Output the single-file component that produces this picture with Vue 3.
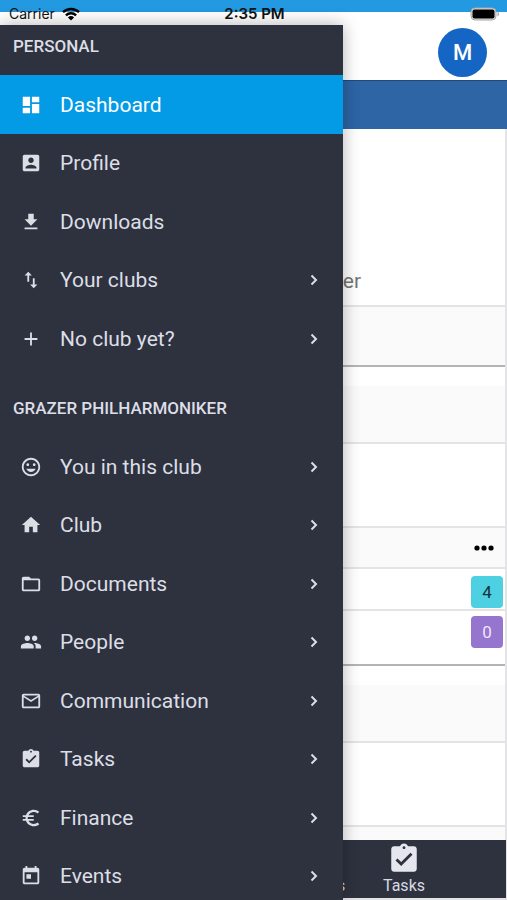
<script setup>
const icons = {
  dashboard: 'M3 13h8V3H3v10zm0 8h8v-6H3v6zm10 0h8V11h-8v10zm0-18v6h8V3h-8z',
  profile: 'M3 5v14c0 1.1.89 2 2 2h14c1.1 0 2-.9 2-2V5c0-1.1-.9-2-2-2H5c-1.11 0-2 .9-2 2zm12 4c0 1.66-1.34 3-3 3s-3-1.34-3-3 1.34-3 3-3 3 1.34 3 3zm-9 8c0-2 4-3.1 6-3.1s6 1.1 6 3.1v1H6v-1z',
  download: 'M19 9h-4V3H9v6H5l7 7 7-7zM5 18v2h14v-2H5z',
  swap: 'M16 17.01V10h-2v7.01h-3L15 21l4-3.99h-3zM9 3L5 6.99h3V14h2V6.99h3L9 3z',
  add: 'M19 13h-6v6h-2v-6H5v-2h6V5h2v6h6v2z',
  face: 'M11.99 2C6.47 2 2 6.48 2 12s4.47 10 9.99 10C17.52 22 22 17.52 22 12S17.52 2 11.99 2zM12 20c-4.42 0-8-3.58-8-8s3.58-8 8-8 8 3.58 8 8-3.58 8-8 8zm3.5-9c.83 0 1.5-.67 1.5-1.5S16.33 8 15.5 8 14 8.67 14 9.5s.67 1.5 1.5 1.5zm-7 0c.83 0 1.5-.67 1.5-1.5S9.33 8 8.5 8 7 8.67 7 9.5 7.67 11 8.5 11zm3.5 6.5c2.33 0 4.31-1.46 5.11-3.5H6.89c.8 2.04 2.78 3.5 5.11 3.5z',
  home: 'M10 20v-6h4v6h5v-8h3L12 3 2 12h3v8z',
  folder: 'M20 6h-8l-2-2H4c-1.1 0-1.99.9-1.99 2L2 18c0 1.1.9 2 2 2h16c1.1 0 2-.9 2-2V8c0-1.1-.9-2-2-2zm0 12H4V8h16v10z',
  people: 'M16 11c1.66 0 2.99-1.34 2.99-3S17.66 5 16 5c-1.66 0-3 1.34-3 3s1.34 3 3 3zm-8 0c1.66 0 2.99-1.34 2.99-3S9.66 5 8 5C6.34 5 5 6.34 5 8s1.34 3 3 3zm0 2c-2.33 0-7 1.17-7 3.5V19h14v-2.5c0-2.33-4.67-3.5-7-3.5zm8 0c-.29 0-.62.02-.97.05 1.16.84 1.97 1.97 1.97 3.45V19h6v-2.5c0-2.33-4.67-3.5-7-3.5z',
  mail: 'M20 4H4c-1.1 0-1.99.9-1.99 2L2 18c0 1.1.9 2 2 2h16c1.1 0 2-.9 2-2V6c0-1.1-.9-2-2-2zm0 14H4V8l8 5 8-5v10zm-8-7L4 6h16l-8 5z',
  tasks: 'M19 3h-4.18C14.4 1.84 13.3 1 12 1c-1.3 0-2.4.84-2.82 2H5c-1.1 0-2 .9-2 2v14c0 1.1.9 2 2 2h14c1.1 0 2-.9 2-2V5c0-1.1-.9-2-2-2zm-7 0c.55 0 1 .45 1 1s-.45 1-1 1-1-.45-1-1 .45-1 1-1zm-2 14l-4-4 1.41-1.41L10 14.17l6.59-6.59L18 9l-8 8z',
  euro: 'M15 18.5c-2.51 0-4.68-1.42-5.76-3.5H15v-2H8.58c-.05-.33-.08-.66-.08-1s.03-.67.08-1H15V9H9.24C10.32 6.92 12.5 5.5 15 5.5c1.61 0 3.09.59 4.23 1.57L21 5.3C19.41 3.87 17.3 3 15 3c-3.92 0-7.24 2.51-8.48 6H3v2h3.06c-.04.33-.06.66-.06 1s.02.67.06 1H3v2h3.52c1.24 3.49 4.56 6 8.48 6 2.31 0 4.41-.87 6-2.3l-1.78-1.77c-1.13.98-2.6 1.57-4.22 1.57z',
  event: 'M19 3h-1V1h-2v2H8V1H6v2H5c-1.11 0-1.99.9-1.99 2L3 19c0 1.1.89 2 2 2h14c1.1 0 2-.9 2-2V5c0-1.1-.9-2-2-2zm0 16H5V8h14v11zM7 10h5v5H7z',
}

const groups = [
  {
    title: 'PERSONAL',
    items: [
      { label: 'Dashboard', icon: 'dashboard', active: true },
      { label: 'Profile', icon: 'profile' },
      { label: 'Downloads', icon: 'download' },
      { label: 'Your clubs', icon: 'swap', more: true },
      { label: 'No club yet?', icon: 'add', more: true },
    ],
  },
  {
    title: 'GRAZER PHILHARMONIKER',
    items: [
      { label: 'You in this club', icon: 'face', more: true },
      { label: 'Club', icon: 'home', more: true },
      { label: 'Documents', icon: 'folder', more: true },
      { label: 'People', icon: 'people', more: true },
      { label: 'Communication', icon: 'mail', more: true },
      { label: 'Tasks', icon: 'tasks', more: true },
      { label: 'Finance', icon: 'euro', more: true },
      { label: 'Events', icon: 'event', more: true },
    ],
  },
]

const tabs = [
  { label: 'Discussions', icon: 'mail' },
  { label: 'Tasks', icon: 'tasks' },
]
</script>

<template>
  <div class="screen">
    <div class="status">
      <div class="carrier">
        <span>Carrier</span>
        <svg class="wifi" viewBox="0 0 18 14" aria-hidden="true">
          <path d="M1 5.2a11.5 11.5 0 0 1 16 0M3.9 8.3a7.3 7.3 0 0 1 10.2 0" fill="none" stroke="#000" stroke-width="2.4" />
          <path d="M9 13.6 5.9 10.4a4.5 4.5 0 0 1 6.2 0z" fill="#000" />
        </svg>
      </div>
      <span class="clock">2:35 PM</span>
      <svg class="battery" viewBox="0 0 30 14" aria-hidden="true">
        <rect x="1" y="1" width="25" height="12" rx="4" fill="#ddd" stroke="#a8a8a8" />
        <path d="M27.5 4.5v5c2-.8 2-4.2 0-5z" fill="#a8a8a8" />
        <rect x="2.5" y="2.5" width="22" height="9" rx="2" fill="#000" />
      </svg>
    </div>

    <div class="body">
      <div class="page">
        <header class="topbar">
          <button class="avatar" type="button" aria-label="Account">M</button>
        </header>
        <div class="band"></div>
        <main class="content">
          <section class="card">
            <div class="hero"><p>Grazer Philharmoniker</p></div>
            <div class="card-foot"></div>
          </section>
          <section class="card">
            <div class="card-head"></div>
            <div class="card-body"></div>
            <div class="toolbar">
              <button class="dots" type="button" aria-label="More options">
                <svg viewBox="0 0 20 6" aria-hidden="true">
                  <circle cx="3" cy="3" r="2.6" /><circle cx="10" cy="3" r="2.6" /><circle cx="17" cy="3" r="2.6" />
                </svg>
              </button>
            </div>
            <div class="count-row"><span class="badge cyan">4</span></div>
            <div class="count-row last"><span class="badge violet">0</span></div>
          </section>
          <section class="card">
            <div class="card-head"></div>
            <div class="card-body"></div>
            <div class="toolbar"></div>
          </section>
        </main>
        <nav class="tabs" aria-label="Tabs">
          <a v-for="tab in tabs" :key="tab.label" class="tab" href="#">
            <svg viewBox="0 0 24 24" aria-hidden="true"><path :d="icons[tab.icon]" /></svg>
            <span>{{ tab.label }}</span>
          </a>
        </nav>
      </div>

      <aside class="drawer">
        <nav v-for="group in groups" :key="group.title" class="group">
          <h2>{{ group.title }}</h2>
          <ul>
            <li v-for="item in group.items" :key="item.label">
              <a href="#" class="item" :class="{ active: item.active }">
                <svg class="icon" viewBox="0 0 24 24" aria-hidden="true"><path :d="icons[item.icon]" /></svg>
                <span class="label">{{ item.label }}</span>
                <svg v-if="item.more" class="chevron" viewBox="0 0 8 12" aria-hidden="true">
                  <path d="M1.5 1.5 6 6l-4.5 4.5" />
                </svg>
              </a>
            </li>
          </ul>
        </nav>
      </aside>
    </div>
  </div>
</template>

<style>
body {
  margin: 0;
  background: #fff;
}
</style>

<style scoped>
* {
  box-sizing: border-box;
}

.screen {
  display: flex;
  flex-direction: column;
  height: 100vh;
  overflow: hidden;
  background: #fff;
  font-family: Roboto, "Liberation Sans", sans-serif;
}

.status {
  display: grid;
  grid-template-columns: 1fr auto 1fr;
  align-items: center;
  flex: none;
  height: 25px;
  padding: 2px 7px 0 9px;
  background: linear-gradient(#2299e0 12px, #fff 12px);
  color: #111;
  font-family: Inter, "Liberation Sans", sans-serif;
  font-size: 14px;
  line-height: 22px;
}

.carrier {
  display: flex;
  align-items: center;
  gap: 7px;
}

.wifi {
  width: 18px;
  height: 14px;
}

.clock {
  font-size: 15px;
  font-weight: 600;
}

.battery {
  justify-self: end;
  width: 30px;
  height: 14px;
}

.body {
  position: relative;
  flex: 1;
  min-height: 0;
}

.page {
  display: flex;
  flex-direction: column;
  height: 100%;
  padding-bottom: 2px;
  background: #e4e4e6;
}

.topbar {
  display: flex;
  align-items: center;
  justify-content: flex-end;
  flex: none;
  height: 55px;
  padding: 0 20px;
  background: #fff;
}

.avatar {
  width: 49px;
  height: 49px;
  padding: 0;
  border: 0;
  border-radius: 50%;
  background: #1565c5;
  color: #fff;
  font: 500 22px/49px Roboto, sans-serif;
}

.band {
  flex: none;
  height: 49px;
  border-top: 1px solid #1f4a80;
  background: #2d65a5;
}

.content {
  display: flex;
  flex-direction: column;
  gap: 19px;
  flex: 1;
  min-height: 0;
  margin-right: 2px;
  overflow: hidden;
  background: #fff;
}

.card {
  flex: none;
  border-bottom: 2px solid #b4b4b4;
}

.hero {
  display: flex;
  align-items: flex-end;
  justify-content: center;
  height: 176px;
  padding: 0 0 12px 10px;
  color: #757575;
  font-size: 21px;
  line-height: 24px;
}

.hero p {
  margin: 0;
}

.card-foot {
  height: 60px;
  border-top: 2px solid #e4e4e4;
  background: #fafafa;
}

.card-head {
  height: 56px;
  background: #fafafa;
}

.card-body {
  height: 84px;
  border-top: 2px solid #e4e4e4;
}

.toolbar {
  display: flex;
  align-items: center;
  justify-content: flex-end;
  height: 41px;
  padding-right: 11px;
  border-top: 2px solid #e4e4e4;
  background: #fafafa;
}

.dots {
  display: flex;
  padding: 0;
  border: 0;
  background: none;
}

.dots svg {
  width: 20px;
  height: 6px;
}

.count-row {
  display: flex;
  align-items: flex-start;
  justify-content: flex-end;
  height: 42px;
  padding: 7px 2px 0 0;
  border-top: 2px solid #e4e4e4;
}

.count-row.last {
  height: 55px;
  padding-top: 5px;
}

.badge {
  width: 32px;
  height: 32px;
  border-radius: 4px;
  font-size: 17px;
  line-height: 32px;
  text-align: center;
}

.cyan {
  background: #4dd0e1;
  color: #12333a;
}

.violet {
  background: #9575cd;
  color: #f0e6ff;
}

.tabs {
  display: flex;
  justify-content: flex-end;
  flex: none;
  height: 58px;
  margin-right: 1px;
  padding-right: 51px;
  background: #2e323f;
}

.tab {
  display: flex;
  flex-direction: column;
  align-items: center;
  flex: 0 1 102px;
  padding-top: 2px;
  color: #d8dae3;
  font-size: 16px;
  line-height: 20px;
  text-decoration: none;
}

.tab svg {
  width: 34px;
  height: 34px;
  fill: #e6e7ee;
}

.drawer {
  position: absolute;
  inset: 0 auto 0 0;
  width: 343px;
  max-width: 85%;
  overflow: hidden;
  background: #2e323f;
  box-shadow: 0 0 16px rgba(0, 0, 0, 0.3);
}

.group {
  margin-bottom: 19px;
}

.group h2 {
  height: 50px;
  margin: 0;
  padding: 10px 13px;
  color: #dcdee6;
  font-size: 17px;
  font-weight: 500;
  line-height: 22px;
}

.group ul {
  margin: 0;
  padding: 0;
  list-style: none;
}

.group li {
  height: 59px;
}

.group li:nth-child(even) {
  height: 58px;
}

.item {
  display: flex;
  align-items: center;
  gap: 18px;
  height: 100%;
  padding: 0 25px 0 20px;
  color: #dcdee6;
  font-size: 21px;
  line-height: 28px;
  text-decoration: none;
}

.active {
  background: #039be5;
  color: #fff;
}

.icon {
  flex: none;
  width: 22px;
  height: 22px;
  fill: currentColor;
}

.label {
  flex: 1;
}

.chevron {
  flex: none;
  width: 8px;
  height: 12px;
  fill: none;
  stroke: currentColor;
  stroke-width: 2;
}
</style>
